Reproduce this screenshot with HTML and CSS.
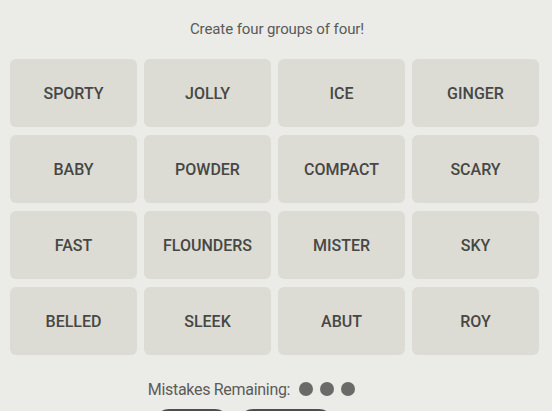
FILE: index.html
```html
<!DOCTYPE html>
<html>
<head>
<meta charset="utf-8">
<link rel="stylesheet" href="styles.css">
</head>
<body>
<div class="page">
  <h1 class="title">Create four groups of four!</h1>
  <div class="grid">
    <div class="tile">SPORTY</div>
    <div class="tile">JOLLY</div>
    <div class="tile">ICE</div>
    <div class="tile">GINGER</div>
    <div class="tile">BABY</div>
    <div class="tile">POWDER</div>
    <div class="tile">COMPACT</div>
    <div class="tile">SCARY</div>
    <div class="tile">FAST</div>
    <div class="tile">FLOUNDERS</div>
    <div class="tile">MISTER</div>
    <div class="tile">SKY</div>
    <div class="tile">BELLED</div>
    <div class="tile">SLEEK</div>
    <div class="tile">ABUT</div>
    <div class="tile">ROY</div>
  </div>
  <div class="mistakes">
    <span class="label">Mistakes Remaining:</span>
    <span class="dot"></span><span class="dot"></span><span class="dot"></span>
  </div>
  <div class="buttons">
    <div class="btn btn-a"></div>
    <div class="btn btn-b"></div>
  </div>
</div>
</body>
</html>
```
FILE: styles.css
```css
html, body {
  margin: 0;
  padding: 0;
  background: #ebebe7;
}
.page {
  font-family: Roboto, "Liberation Sans", sans-serif;
  display: flex;
  flex-direction: column;
  align-items: center;
  padding-top: 19px;
  height: 411px;
  box-sizing: border-box;
  overflow: hidden;
}
.title {
  margin: 0;
  font-size: 15px;
  font-weight: 400;
  color: #5a5a58;
  line-height: 20px;
  height: 20px;
  padding-left: 2px;
  letter-spacing: -0.1px;
}
.grid {
  margin-top: 20px;
  display: grid;
  grid-template-columns: repeat(4, 127px);
  grid-auto-rows: 68px;
  column-gap: 7px;
  row-gap: 8px;
  margin-left: -3px;
  flex-shrink: 0;
}
.tile {
  background: #dcdcd4;
  border-radius: 6px;
  display: flex;
  align-items: center;
  justify-content: center;
  font-size: 16px;
  font-weight: 500;
  color: #474745;
}
.mistakes {
  margin-top: 24px;
  display: flex;
  align-items: center;
  gap: 7px;
  padding-right: 49px;
  height: 20px;
  flex-shrink: 0;
}
.label {
  font-size: 16px;
  color: #5c5c5a;
  margin-right: 2px;
  letter-spacing: -0.3px;
}
.dot {
  width: 14px;
  height: 14px;
  border-radius: 50%;
  background: #6a6a68;
}
.buttons {
  margin-top: 10px;
  display: flex;
  gap: 8px;
  padding-right: 64px;
  flex-shrink: 0;
}
.btn {
  height: 30px;
  border: 2px solid #4e4e4c;
  border-radius: 15px;
  box-sizing: border-box;
}
.btn-a { width: 76px; }
.btn-b { width: 96px; }
```
